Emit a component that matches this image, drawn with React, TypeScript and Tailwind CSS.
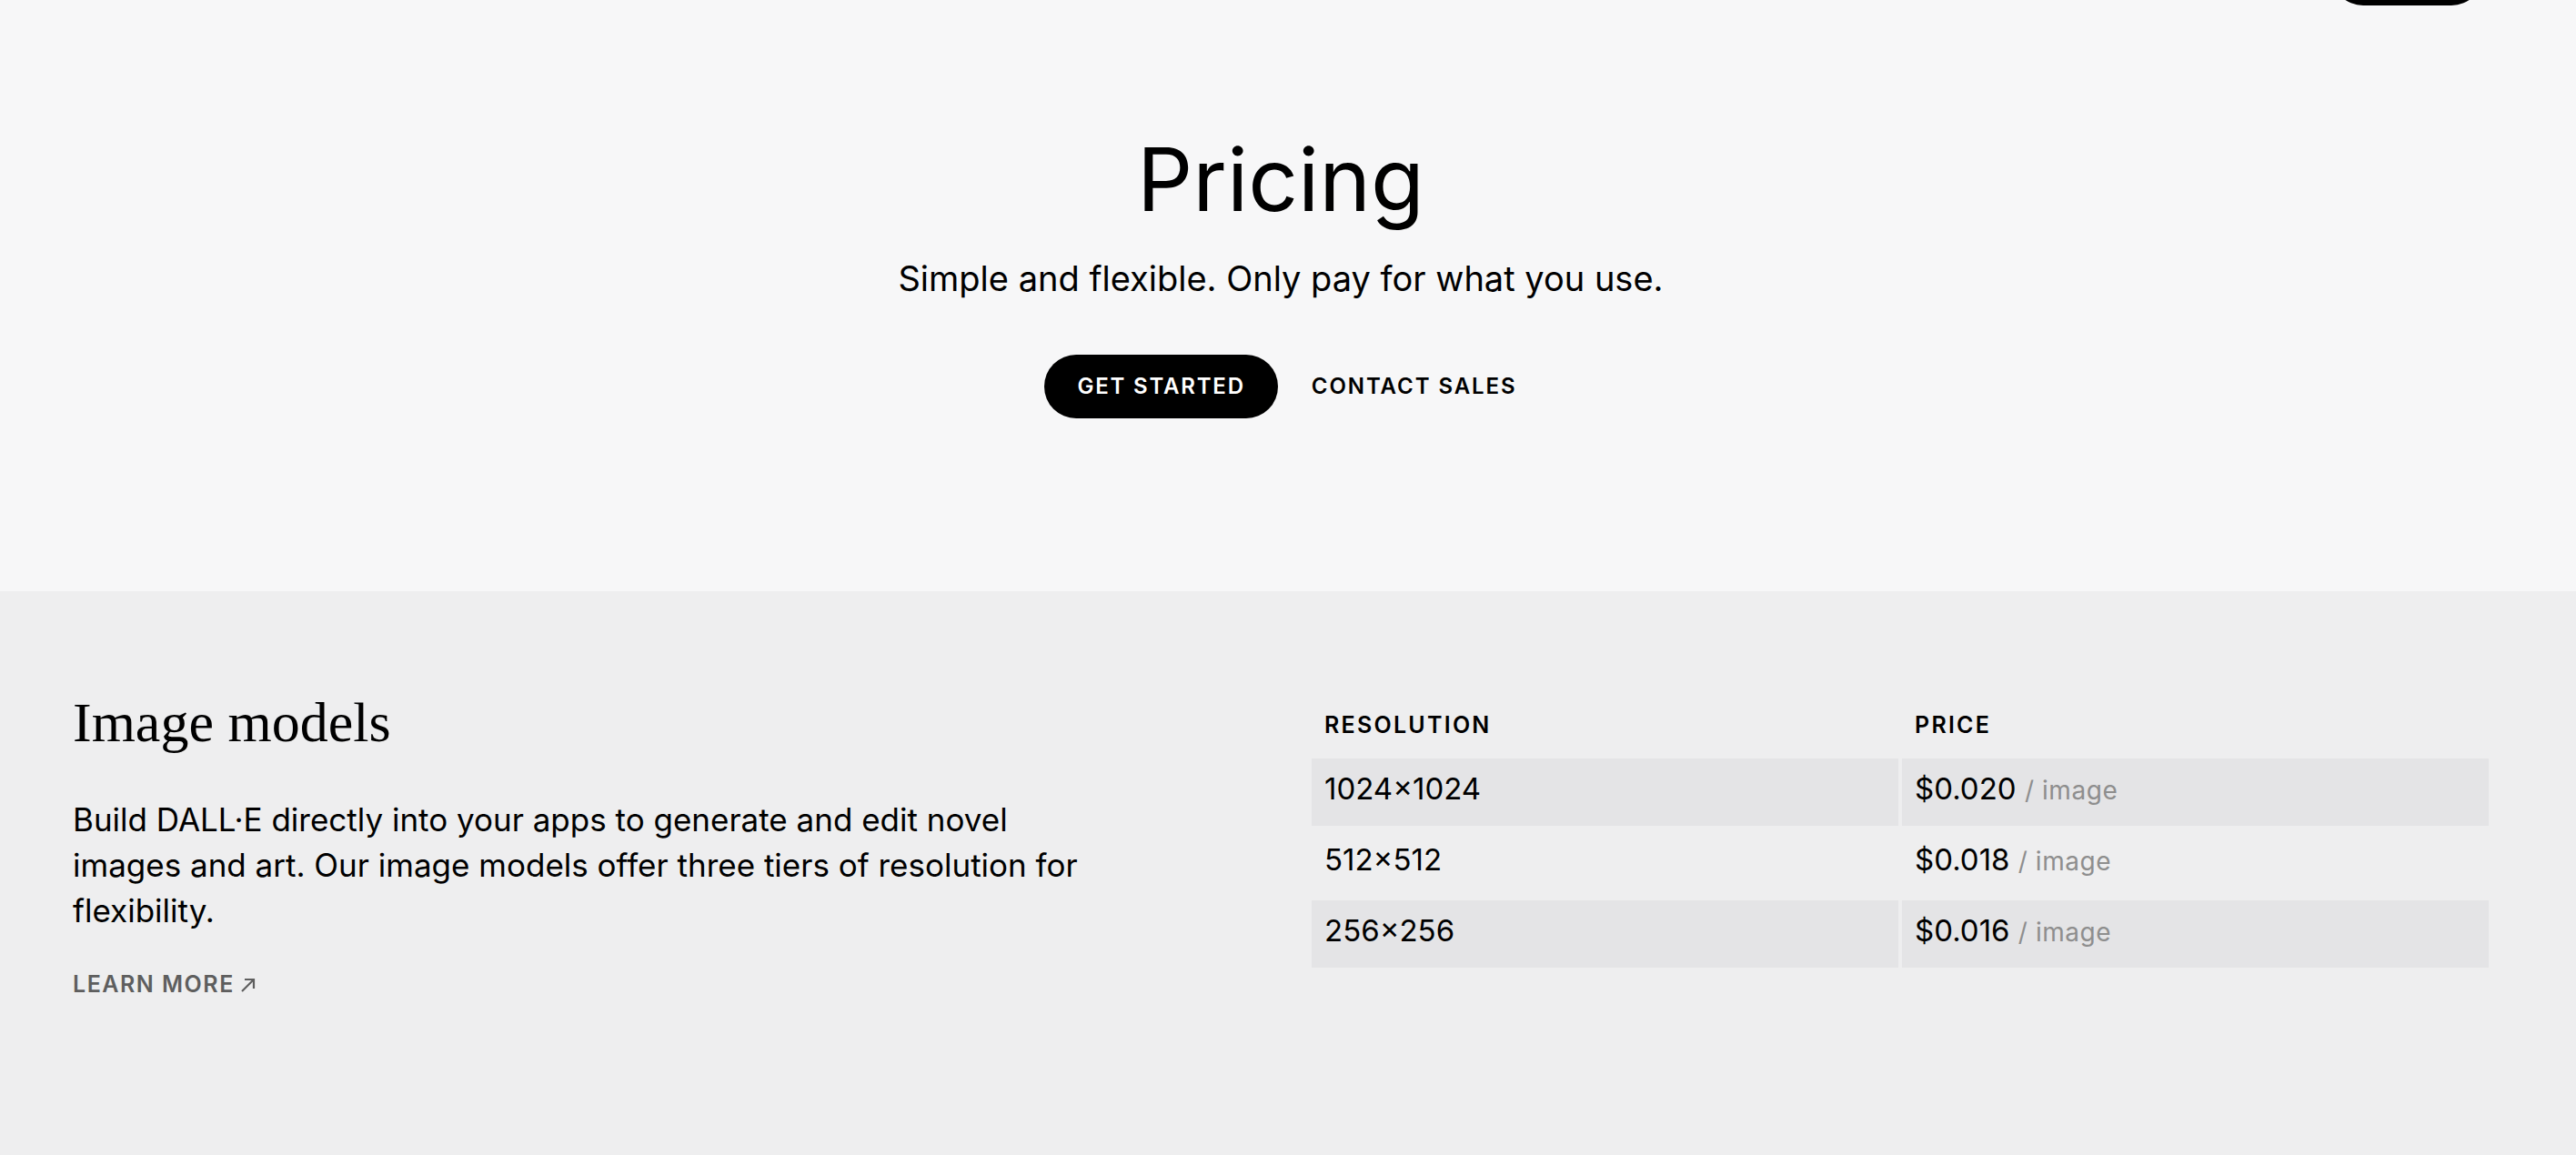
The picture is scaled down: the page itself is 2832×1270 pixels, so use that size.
import React from 'react';

const rows = [
  { res: '1024×1024', price: '$0.020' },
  { res: '512×512', price: '$0.018' },
  { res: '256×256', price: '$0.016' },
];

export default function App() {
  return (
    <div className="min-h-screen bg-[#eeeeef] text-black font-['Inter','Liberation_Sans',sans-serif]">
      {/* hero */}
      <section className="bg-[#f7f7f8] h-[650px]">
        <div className="mr-[16px]">
          <div className="h-[6px] overflow-hidden flex justify-end pr-[86px]">
            <div className="w-[167px] h-[70px] -mt-[64px] rounded-full bg-black shrink-0" />
          </div>
          <div className="flex flex-col items-center pt-[143px]">
            <h1 className="text-[96px] leading-none font-normal">Pricing</h1>
            <p className="mt-[42px] text-[38px] leading-none">Simple and flexible. Only pay for what you use.</p>
            <div className="mt-[65px] flex items-center gap-[37px]">
              <button className="h-[70px] px-[36px] rounded-full bg-black text-white text-[24px] font-semibold tracking-[0.075em]">
                GET STARTED
              </button>
              <button className="h-[70px] text-[24px] font-semibold tracking-[0.08em]">CONTACT SALES</button>
            </div>
          </div>
        </div>
      </section>

      {/* image models */}
      <section className="h-[620px]">
        <div className="mr-[16px] px-[80px] pt-[113px] grid grid-cols-2 gap-x-[68px]">
          <div>
            <h2 className="font-['Liberation_Serif',serif] text-[62px] leading-none">Image models</h2>
            <p className="mt-[51px] max-w-[1112px] text-[35px] leading-[50px]">
              Build DALL·E directly into your apps to generate and edit novel images and art. Our image models offer
              three tiers of resolution for flexibility.
            </p>
            <a className="mt-[44px] inline-flex items-center gap-[6px] text-[25px] leading-none font-semibold tracking-[0.06em] text-[#5e5e5e]">
              LEARN MORE
              <svg width="18" height="18" viewBox="0 0 18 18" fill="none" stroke="currentColor" strokeWidth="2.2">
                <path d="M2 16 15 3" />
                <path d="M5 3h10v10" />
              </svg>
            </a>
          </div>
          <div className="mt-[22px]">
            <div className="grid grid-cols-2 gap-[4px]">
              <div className="px-[14px] pb-[20px] text-[25px] leading-none font-semibold tracking-[0.09em]">RESOLUTION</div>
              <div className="px-[14px] pb-[20px] text-[25px] leading-none font-semibold tracking-[0.09em]">PRICE</div>
              {rows.map((r, i) => (
                <React.Fragment key={r.res}>
                  <div className={`h-[74px] flex items-center px-[14px] pb-[6px] text-[33px] ${i % 2 === 0 ? 'bg-[#e4e4e6]' : ''}`}>
                    {r.res}
                  </div>
                  <div className={`h-[74px] flex items-center px-[14px] pb-[6px] text-[33px] ${i % 2 === 0 ? 'bg-[#e4e4e6]' : ''}`}>
                    <span>
                      {r.price} <span className="text-[28px] tracking-[0.02em] text-[#8e8e8e]">/ image</span>
                    </span>
                  </div>
                </React.Fragment>
              ))}
            </div>
          </div>
        </div>
      </section>
    </div>
  );
}
